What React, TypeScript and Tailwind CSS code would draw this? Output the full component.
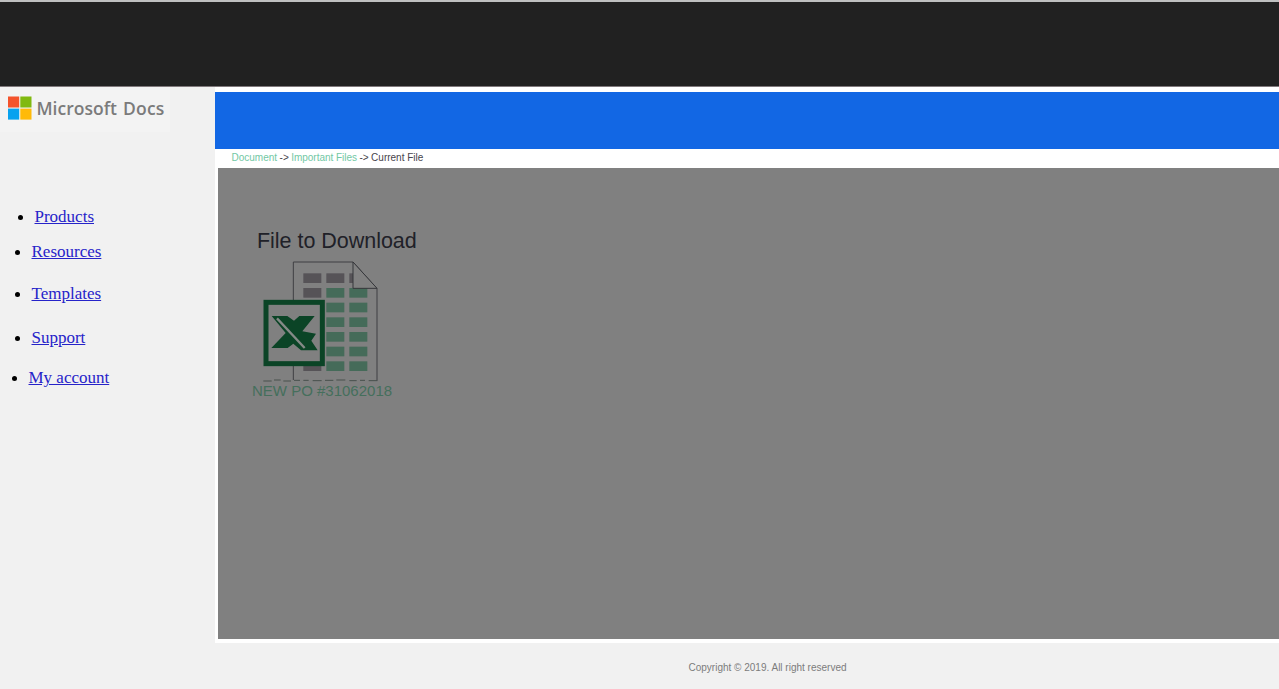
import React from 'react';

const navItems = [
  { label: 'Products', row: 'pl-[34.5px]', dot: 'left-[18px]', height: 'h-[35px]' },
  { label: 'Resources', row: 'pl-[31.5px]', dot: 'left-[15px]', height: 'h-[42px]' },
  { label: 'Templates', row: 'pl-[31.5px]', dot: 'left-[15px]', height: 'h-[44px]' },
  { label: 'Support', row: 'pl-[31.5px]', dot: 'left-[15px]', height: 'h-[40px]' },
  { label: 'My account', row: 'pl-[28.5px]', dot: 'left-[12px]', height: 'h-[20px]' },
];

function Logo() {
  return (
    <div className="flex h-[45px] w-[170px] items-start bg-[#f3f3f3] pl-2 pt-[9px] whitespace-nowrap">
      <svg width="24" height="24" viewBox="0 0 24 24" className="shrink-0">
        <rect x="0" y="0.5" width="11.2" height="11" fill="#f4532c" />
        <rect x="12.3" y="0.5" width="11.2" height="11" fill="#80b90f" />
        <rect x="0" y="12.6" width="11.2" height="11" fill="#08a2ef" />
        <rect x="12.3" y="12.6" width="11.2" height="11" fill="#ffba08" />
      </svg>
      <span className="ml-[4.5px] w-[86.5px] text-[17.5px] font-semibold leading-[24px] text-[#7b7b7b]">
        Microsoft
      </span>
      <span className="text-[17.5px] font-semibold leading-[24px] tracking-[0.2px] text-[#7b7b7b]">Docs</span>
    </div>
  );
}

function SpreadsheetIcon() {
  const rows = [160, 204, 248, 292, 336, 380, 424];
  return (
    <svg width="120" height="124" viewBox="60 114 360 372" className="block">
      <path d="M160 480V126H339L411 206V482" fill="none" stroke="#3f3f43" strokeWidth="3" />
      <path d="M70 483H95M102 480H122M130 483H153M162 481H180M190 481H206M218 482H245M255 481H280M289 480H316M328 482H350M360 481H375M386 482H412" stroke="#48504c" strokeWidth="3" />
      {rows.map((y, i) => (
        <g key={y}>
          <rect x="190" y={y} width="54" height="29" fill="#565357" />
          <rect x="259" y={y} width="54" height="29" fill={i === 0 ? '#565357' : '#456b59'} />
          <rect x="328" y={y} width={i === 0 ? 11 : 54} height="29" fill={i === 0 ? '#565357' : '#456b59'} />
        </g>
      ))}
      <path d="M339 126V205H411Z" fill="#808080" stroke="#35363a" strokeWidth="3" />
      <rect x="78" y="247" width="169" height="184" fill="#808080" stroke="#0b4426" strokeWidth="15" />
      <path d="M95 288H142L162 302L178 288H224L187 334L228 341L214 362L233 391H183L160 371L143 384H94L137 339Z" fill="#0b4426" />
      <path d="M111 295L194 384" stroke="#858a87" strokeWidth="7" />
    </svg>
  );
}

export default function App() {
  return (
    <div className="flex h-[689px] w-[1279px] flex-col overflow-hidden bg-[#f1f1f1] font-['Liberation_Sans',Arial,sans-serif]">
      <header className="h-[87px] shrink-0 border-b border-t-2 border-b-[#80797c] border-t-[#bfc0c0] bg-[#212121]" />
      <div className="flex h-[556px] shrink-0">
        <aside className="w-[215px] shrink-0">
          <div className="font-['Open_Sans','Noto_Sans',sans-serif]">
            <Logo />
          </div>
          <ul className="mt-[75px] font-['Liberation_Serif','Times_New_Roman',serif] text-[17px] leading-[20px]">
            {navItems.map((item) => (
              <li key={item.label} className={`relative ${item.row} ${item.height}`}>
                <span className={`absolute top-[8px] size-[5px] rounded-full bg-black ${item.dot}`} />
                <a href="#" className="text-[#2623c9] underline">{item.label}</a>
              </li>
            ))}
          </ul>
        </aside>
        <main className="flex grow flex-col bg-white pt-[5px]">
          <div className="h-[57px] bg-[#1267e4]" />
          <nav className="flex h-[19px] items-center gap-[2.5px] whitespace-nowrap pb-px pl-[16.5px] text-[10px] leading-[12px] text-[#47444b]">
            <a href="#" className="text-[#72c8a4]">Document</a>
            <span>-&gt;</span>
            <a href="#" className="tracking-[-0.03px] text-[#72c8a4]">Important Files</a>
            <span>-&gt;</span>
            <span>Current File</span>
          </nav>
          <section className="ml-[3px] h-[471px] bg-[#808080] pt-[60px]">
            <h1 className="ml-[39px] whitespace-nowrap text-[21.5px] leading-[26px] tracking-[-0.03px] text-[#202128]">File to Download</h1>
            <div className="ml-[42px] mt-[4px]">
              <SpreadsheetIcon />
            </div>
            <p className="ml-[34px] text-[15px] leading-[17px] text-[#456f5c]">NEW PO #31062018</p>
          </section>
        </main>
      </div>
      <footer className="pl-[688.5px] pt-[18px] text-[10px] leading-[13px] text-[#7c7c7c]">
        Copyright © 2019. All right reserved
      </footer>
    </div>
  );
}
